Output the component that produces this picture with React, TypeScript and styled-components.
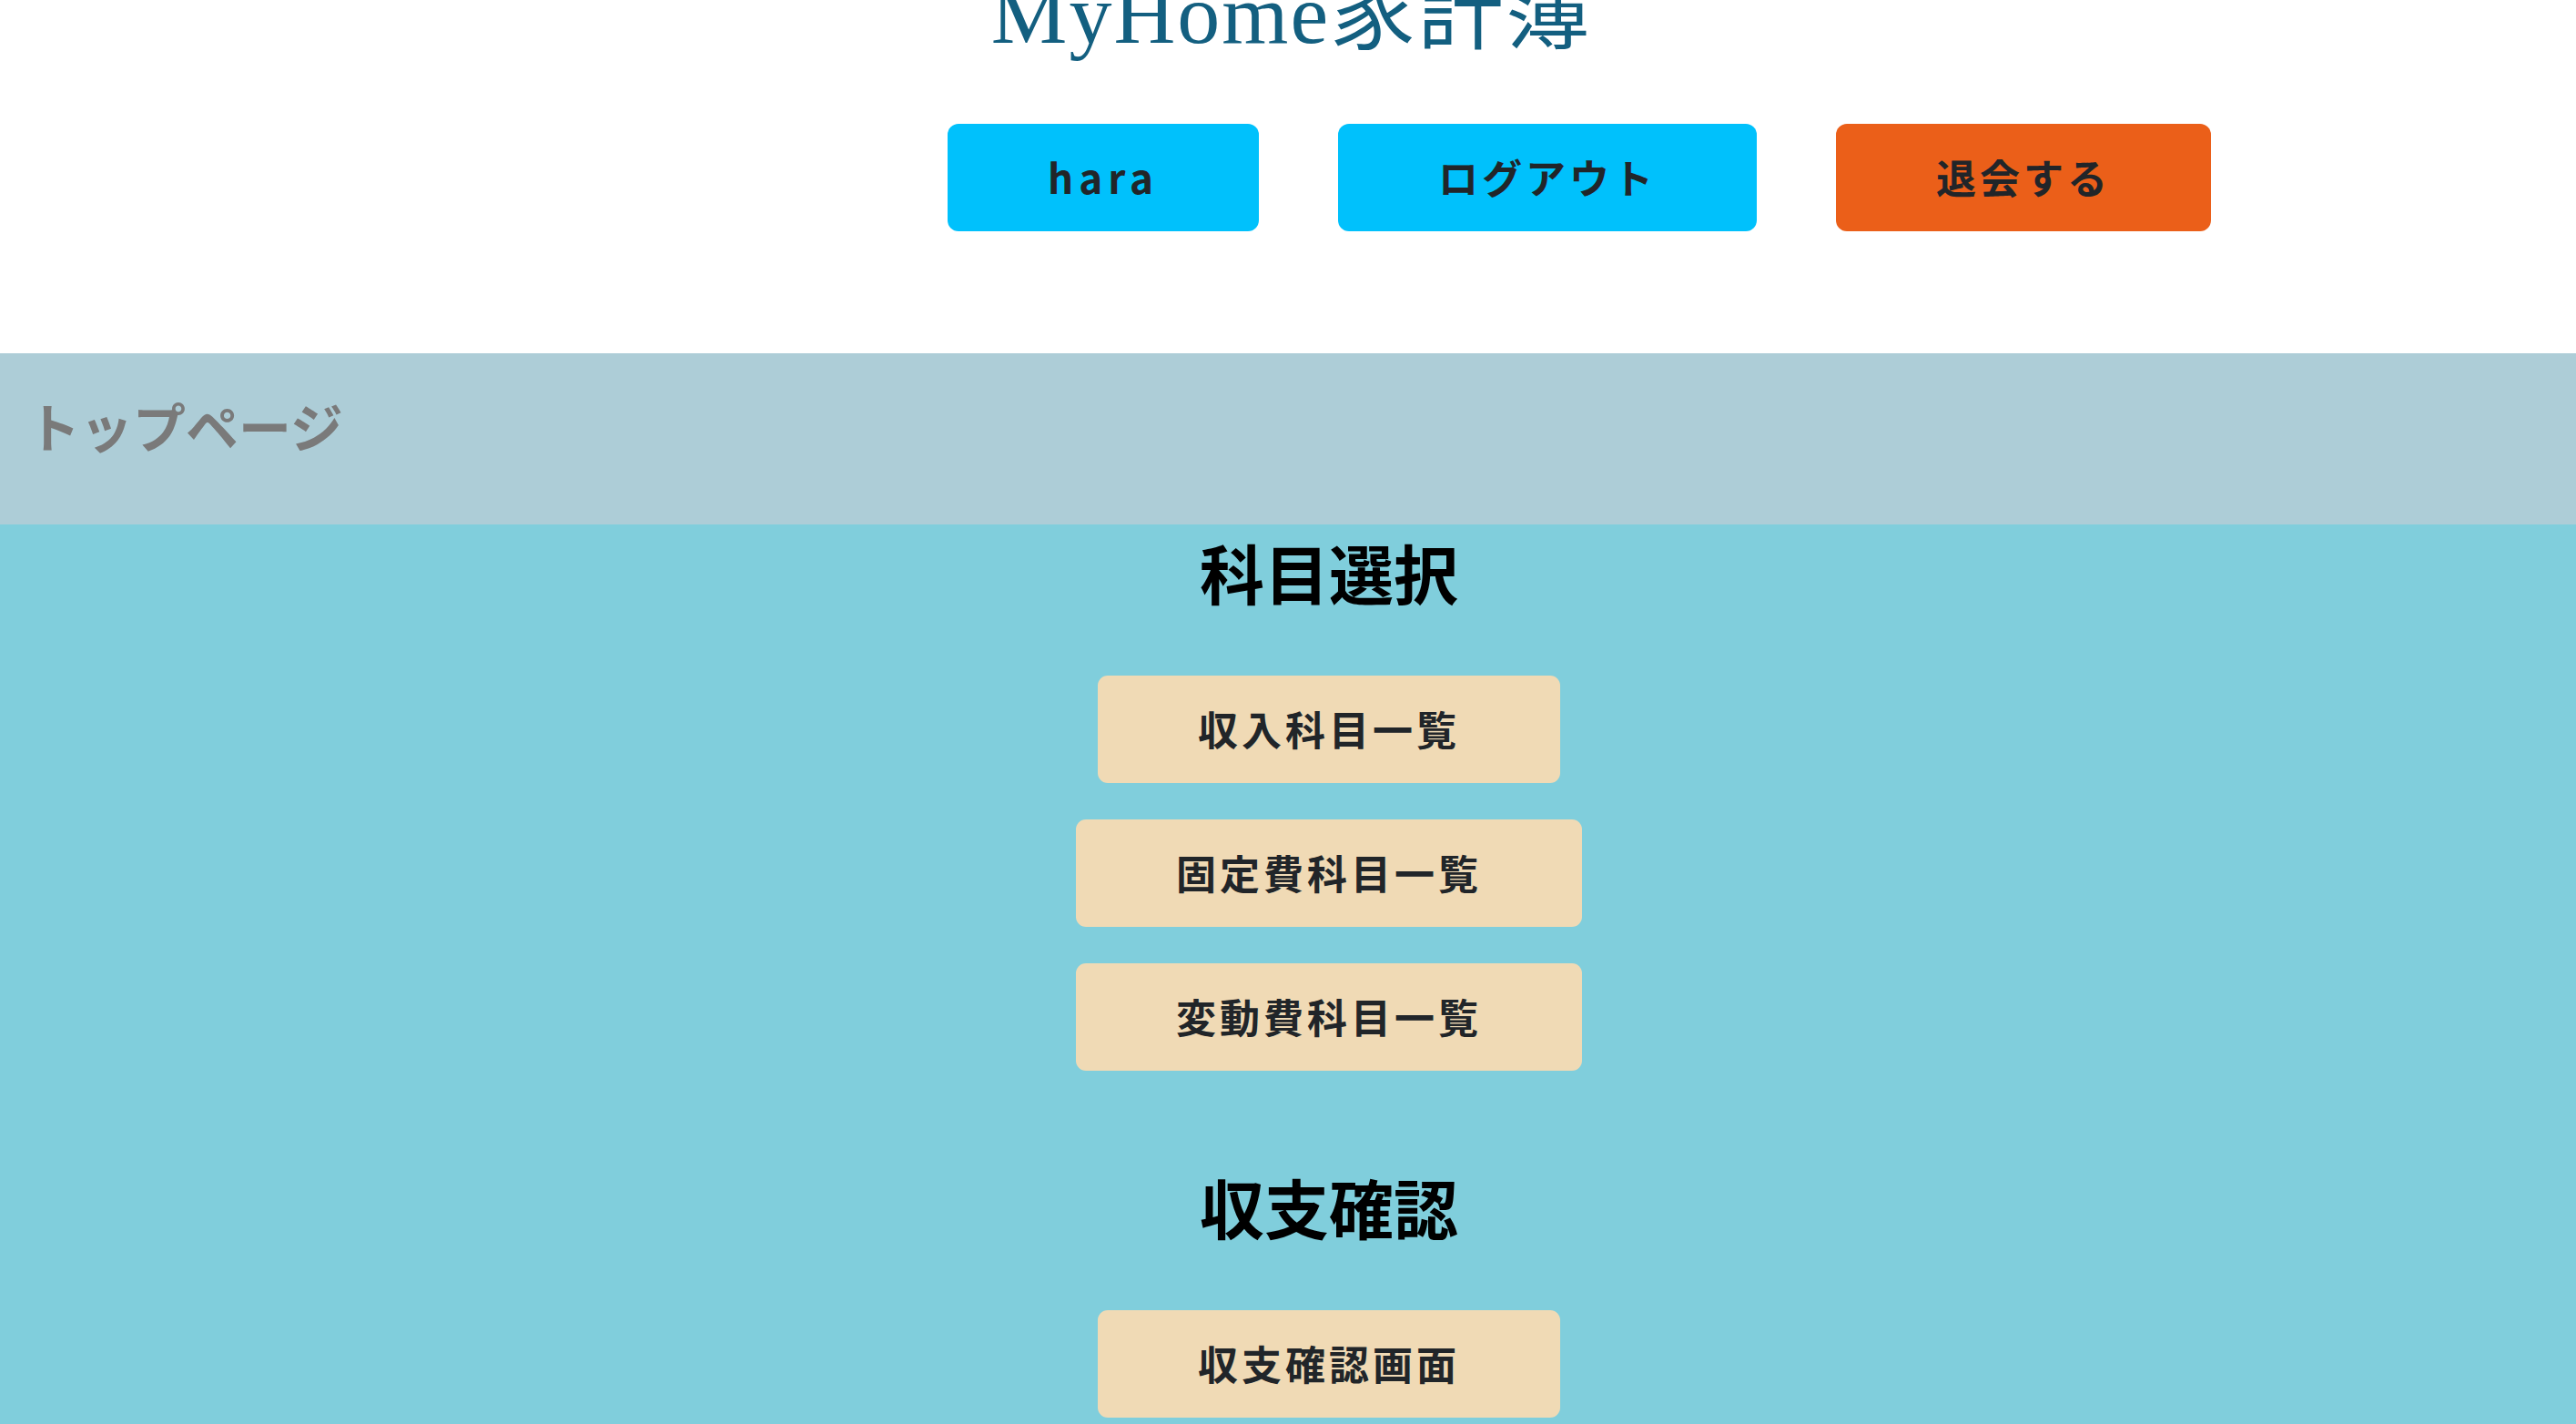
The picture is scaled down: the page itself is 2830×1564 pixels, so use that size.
import React from "react";
import styled, { createGlobalStyle } from "styled-components";

const GlobalStyle = createGlobalStyle`
  html, body {
    margin: 0;
    padding: 0;
    background: #ffffff;
    overflow: hidden;
  }
  body {
    font-family: "Noto Sans CJK JP", "Noto Sans", sans-serif;
  }
  * { box-sizing: border-box; }
`;

const Page = styled.div`
  display: flex;
  flex-direction: column;
  min-height: 1564px;
`;

const Header = styled.header`
  display: flex;
  flex-direction: column;
  background: #ffffff;
  padding-bottom: 134px;
`;

const Title = styled.h1`
  margin: -32px 0 0;
  padding-left: 8px;
  text-align: center;
  font-family: "Liberation Serif", "Noto Sans CJK JP", serif;
  font-weight: 400;
  font-size: 94px;
  line-height: 1;
  letter-spacing: 2px;
  color: #135f80;
`;

const Nav = styled.nav`
  display: flex;
  justify-content: flex-end;
  gap: 87px;
  margin-top: 74px;
  padding-right: 401px;
`;

const PillButton = styled.button<{ $tone: "sky" | "orange" | "beige"; $latin?: boolean }>`
  display: flex;
  align-items: center;
  justify-content: center;
  height: 118px;
  padding: 0 110px 3px;
  border: none;
  border-radius: ${(p) => (p.$tone === "beige" ? "11px" : "12px")};
  background: ${(p) =>
    p.$tone === "sky" ? "#00c1fc" : p.$tone === "orange" ? "#eb5f19" : "#f0dab5"};
  color: #212529;
  font-family: "Noto Sans CJK JP", "Noto Sans", sans-serif;
  font-weight: 700;
  font-size: 44px;
  line-height: 1.5;
  letter-spacing: ${(p) => (p.$latin ? "6px" : "4px")};
  white-space: nowrap;
  cursor: pointer;
`;

const Breadcrumb = styled.div`
  display: flex;
  align-items: flex-start;
  height: 188px;
  padding: 50px 0 0 30px;
  background: #adcdd7;
`;

const BreadcrumbText = styled.span`
  font-size: 58px;
  font-weight: 700;
  line-height: 1;
  color: #7a7a7a;
`;

const Main = styled.main`
  flex: 1;
  display: flex;
  flex-direction: column;
  align-items: center;
  padding: 9px 0 40px 90px;
  background: #80cedc;
`;

const Section = styled.section<{ $spaced?: boolean }>`
  display: flex;
  flex-direction: column;
  align-items: center;
  margin-top: ${(p) => (p.$spaced ? "106px" : "0")};
`;

const SectionTitle = styled.h2`
  margin: 0;
  font-size: 71px;
  font-weight: 700;
  line-height: 1.2;
  color: #000000;
`;

const ButtonList = styled.div`
  display: flex;
  flex-direction: column;
  align-items: center;
  gap: 40px;
  margin-top: 72px;
`;

export default function App() {
  return (
    <>
      <GlobalStyle />
      <Page>
        <Header>
          <Title>MyHome家計簿</Title>
          <Nav>
            <PillButton $tone="sky" $latin>hara</PillButton>
            <PillButton $tone="sky">ログアウト</PillButton>
            <PillButton $tone="orange">退会する</PillButton>
          </Nav>
        </Header>
        <Breadcrumb>
          <BreadcrumbText>トップページ</BreadcrumbText>
        </Breadcrumb>
        <Main>
          <Section>
            <SectionTitle>科目選択</SectionTitle>
            <ButtonList>
              <PillButton $tone="beige">収入科目一覧</PillButton>
              <PillButton $tone="beige">固定費科目一覧</PillButton>
              <PillButton $tone="beige">変動費科目一覧</PillButton>
            </ButtonList>
          </Section>
          <Section $spaced>
            <SectionTitle>収支確認</SectionTitle>
            <ButtonList>
              <PillButton $tone="beige">収支確認画面</PillButton>
            </ButtonList>
          </Section>
        </Main>
      </Page>
    </>
  );
}
